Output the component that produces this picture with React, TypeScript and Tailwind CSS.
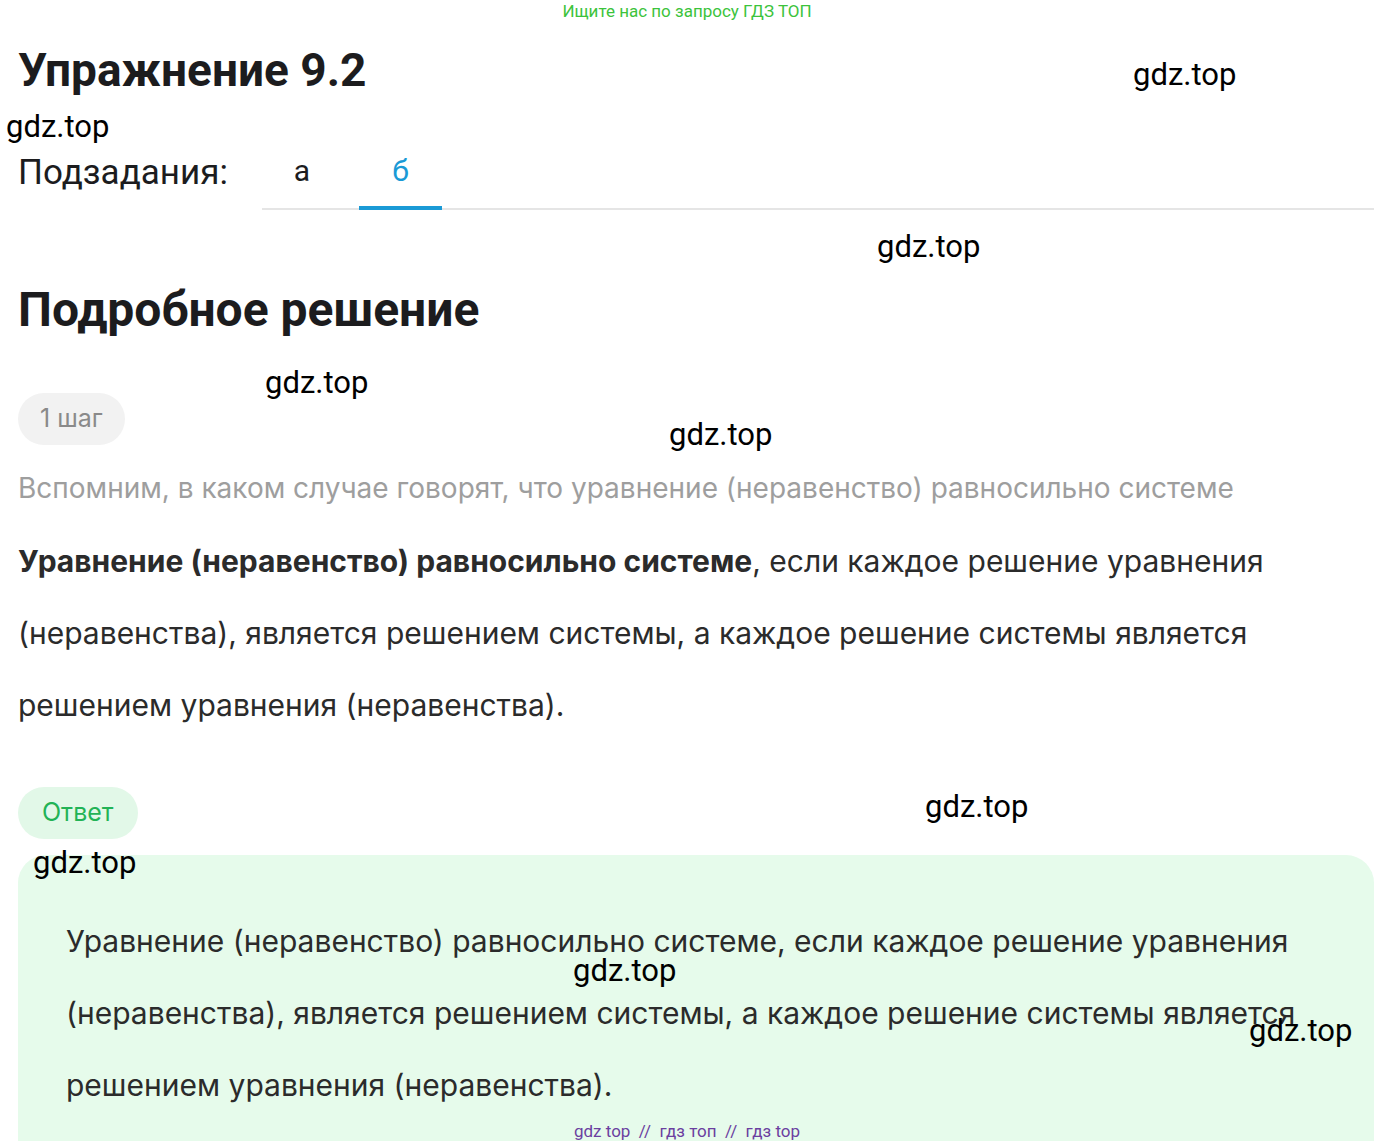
export default function App() {
  const wm = "absolute text-[31px] text-black leading-none";
  const body = { fontFamily: "Inter, 'Noto Sans', sans-serif" };
  return (
    <div className="relative w-[1374px] h-[1146px] overflow-hidden bg-white" style={{ fontFamily: "Roboto, 'Noto Sans', sans-serif" }}>
      <div className="text-center text-[17px] text-[#3cc33c] leading-[22px]">Ищите нас по запросу ГДЗ ТОП</div>
      <div className="pl-[18px]">
        <h1 className="text-[46px] font-bold text-[#1c1c1e] leading-[56px] mt-[20px]">Упражнение 9.2</h1>
        <div className="flex items-end mt-[50px]">
          <div className="text-[35px] text-[#1c1c1e] leading-[50px] pb-[12px] w-[244px]">Подзадания:</div>
          <div className="flex-1 flex border-b-2 border-[#e5e5e5]">
            <div className="w-[80px] text-center text-[30px] text-[#1c1c1e] pb-[14px] leading-[46px]">а</div>
            <div className="ml-[17px] w-[83px] text-center text-[30px] text-[#1a9ad6] pb-[12px] leading-[46px] border-b-[4px] border-[#1a9ad6] -mb-[2px]">б</div>
          </div>
        </div>
        <h2 className="text-[48px] font-bold text-[#1c1c1e] leading-[56px] mt-[72px]">Подробное решение</h2>
        <div className="mt-[55px] inline-flex items-center h-[52px] px-[22px] rounded-full bg-[#f2f2f2] text-[25px] text-[#8a8a8a]" style={body}>1 шаг</div>
        <p className="mt-[22px] text-[28px] text-[#9e9e9e] leading-[42px] whitespace-nowrap" style={body}>Вспомним, в каком случае говорят, что уравнение (неравенство) равносильно системе</p>
        <p className="mt-[16px] text-[30px] text-[#2b2b2b] leading-[72px] pr-[60px]" style={body}><b>Уравнение (неравенство) равносильно системе</b>, если каждое решение уравнения (неравенства), является решением системы, а каждое решение системы является решением уравнения (неравенства).</p>
        <div className="mt-[46px] inline-flex items-center h-[52px] px-[24px] rounded-full bg-[#e2f8e8] text-[25px] text-[#22b356]" style={body}>Ответ</div>
        <div className="mt-[16px] bg-[#e6fbeb] rounded-t-[28px] pl-[48px] pr-[60px] pt-[50px] pb-[20px]">
          <p className="text-[30px] text-[#2b2b2b] leading-[72px]" style={body}>Уравнение (неравенство) равносильно системе, если каждое решение уравнения (неравенства), является решением системы, а каждое решение системы является решением уравнения (неравенства).</p>
        </div>
      </div>
      <div className="absolute left-0 right-0 top-[1120px] text-center text-[17px] text-[#6b3fa0] leading-[22px]">gdz top &nbsp;// &nbsp;гдз топ &nbsp;// &nbsp;гдз top</div>
      <div className={wm} style={{ left: 1133, top: 59 }}>gdz.top</div>
      <div className={wm} style={{ left: 6, top: 111 }}>gdz.top</div>
      <div className={wm} style={{ left: 877, top: 231 }}>gdz.top</div>
      <div className={wm} style={{ left: 265, top: 367 }}>gdz.top</div>
      <div className={wm} style={{ left: 669, top: 419 }}>gdz.top</div>
      <div className={wm} style={{ left: 925, top: 791 }}>gdz.top</div>
      <div className={wm} style={{ left: 33, top: 847 }}>gdz.top</div>
      <div className={wm} style={{ left: 573, top: 955 }}>gdz.top</div>
      <div className={wm} style={{ left: 1249, top: 1015 }}>gdz.top</div>
    </div>
  );
}
